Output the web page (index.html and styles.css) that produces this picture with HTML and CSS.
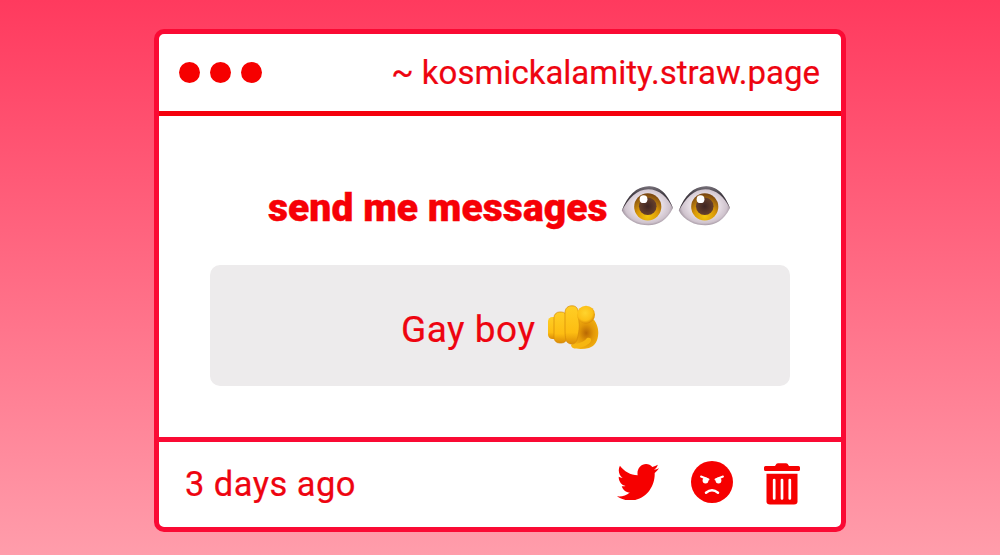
FILE: index.html
```
<!DOCTYPE html>
<html lang="en">
<head>
<meta charset="utf-8">
<title>send me messages</title>
<link rel="stylesheet" href="styles.css">
</head>
<body>
<main class="window">
  <header class="bar">
    <div class="dots"><span class="dot"></span><span class="dot"></span><span class="dot"></span></div>
    <div class="address">~ kosmickalamity.straw.page</div>
  </header>
  <section class="content">
    <h1 class="title"><span class="title-text">send me messages</span>
      <svg class="eye" viewBox="0 0 52 40" role="img" aria-label="eye">
        <defs>
          <radialGradient id="white" cx=".5" cy=".5" r=".55"><stop offset=".4" stop-color="#f1eaf0"/><stop offset=".8" stop-color="#cfc3cd"/><stop offset="1" stop-color="#877a86"/></radialGradient>
          <radialGradient id="iris" cx=".5" cy=".85" r=".8"><stop offset="0" stop-color="#f2c60c"/><stop offset=".5" stop-color="#d89607"/><stop offset="1" stop-color="#7d4a12"/></radialGradient>
          <radialGradient id="pupil"><stop offset="0" stop-color="#3e2522"/><stop offset="1" stop-color="#66402c"/></radialGradient>
          <linearGradient id="lid" x1="0" y1="0" x2="0" y2="1"><stop offset="0" stop-color="#77717a"/><stop offset=".3" stop-color="#454047"/><stop offset="1" stop-color="#383038"/></linearGradient>
        </defs>
        <path d="M.5 24.5C7 10 15 .6 28 .6S48 13 51.7 22C46 34 37 39.3 27 39.3S6 35 .5 24.5Z" fill="url(#white)"/>
        <path d="M.5 25C6 10 15 .3 28 .3S48 12 51.8 22.5C46 11 38 3.2 27 3.2S7 12 .5 25Z" fill="url(#lid)"/>
        <circle cx="26.5" cy="20.8" r="13.6" fill="url(#iris)"/>
        <circle cx="26.5" cy="20.3" r="8.8" fill="url(#pupil)"/>
        <circle cx="22.3" cy="13.2" r="3.9" fill="#fff"/>
      </svg>
      <svg class="eye" viewBox="0 0 52 40" role="img" aria-label="eye">
        <path d="M.5 24.5C7 10 15 .6 28 .6S48 13 51.7 22C46 34 37 39.3 27 39.3S6 35 .5 24.5Z" fill="url(#white)"/>
        <path d="M.5 25C6 10 15 .3 28 .3S48 12 51.8 22.5C46 11 38 3.2 27 3.2S7 12 .5 25Z" fill="url(#lid)"/>
        <circle cx="26.5" cy="20.8" r="13.6" fill="url(#iris)"/>
        <circle cx="26.5" cy="20.3" r="8.8" fill="url(#pupil)"/>
        <circle cx="22.3" cy="13.2" r="3.9" fill="#fff"/>
      </svg>
    </h1>
    <div class="message"><span class="message-text">Gay boy</span>
      <svg class="hand" viewBox="0 0 52 45" role="img" aria-label="pointing hand">
        <defs>
          <linearGradient id="finger" x1="0" y1="0" x2="0" y2="1"><stop offset="0" stop-color="#ffce25"/><stop offset=".7" stop-color="#fdbd12"/><stop offset="1" stop-color="#dc8c05"/></linearGradient>
          <radialGradient id="palm" cx=".55" cy=".5" r=".6"><stop offset="0" stop-color="#b96803"/><stop offset=".45" stop-color="#e39808"/><stop offset="1" stop-color="#f8b713"/></radialGradient>
          <radialGradient id="tip" cx=".45" cy=".4" r=".6"><stop offset="0" stop-color="#ffd42e"/><stop offset=".7" stop-color="#fcbf16"/><stop offset="1" stop-color="#d98b06"/></radialGradient>
        </defs>
        <path d="M27 12L45 13C49 16 51.3 22 51.3 28C51 36 48 41 42 43C36 44.5 29 44 26 43C24 42 24 39 26 38Z" fill="url(#palm)"/>
        <path d="M25 39C31 39 37 37 40 33C42 32 45 33 44 36C42 40 35 43.5 27 43C24 42 23.5 40 25 39Z" fill="#f7b611"/>
        <rect x="1" y="12" width="11" height="22" rx="4.5" fill="url(#finger)"/>
        <rect x="7" y="7" width="13" height="31" rx="5.5" fill="url(#finger)" stroke="#d68a08" stroke-width=".7"/>
        <path d="M18 8C18 3 21 .8 25 .8S31 3 31.5 8L32 17C33 23 31 31 30 35C28 40 23 40 20 37C18 34 18 28 18 22Z" fill="url(#finger)" stroke="#d68a08" stroke-width=".7"/>
        <circle cx="39" cy="9.7" r="9" fill="url(#tip)"/>
      </svg>
    </div>
  </section>
  <footer class="bar foot">
    <div class="time">3 days ago</div>
    <div class="actions">
      <svg class="twitter" viewBox="0 48 512 416" preserveAspectRatio="none"><path d="M459.370 151.716c.325 4.548.325 9.097.325 13.645 0 138.720-105.583 298.558-298.558 298.558-59.452 0-114.680-17.219-161.137-47.106 8.447.974 16.568 1.299 25.340 1.299 49.055 0 94.213-16.568 130.274-44.832-46.132-.975-84.792-31.188-98.112-72.772 6.498.974 12.995 1.624 19.818 1.624 9.421 0 18.843-1.300 27.614-3.573-48.081-9.747-84.143-51.980-84.143-102.985v-1.299c13.969 7.797 30.214 12.670 47.431 13.319-28.264-18.843-46.781-51.005-46.781-87.391 0-19.492 5.197-37.360 14.294-52.954 51.655 63.675 129.300 105.258 216.365 109.807-1.624-7.797-2.599-15.918-2.599-24.040 0-57.828 46.782-104.934 104.934-104.934 30.213 0 57.502 12.670 76.670 33.137 23.715-4.548 46.456-13.320 66.599-25.340-7.798 24.366-24.366 44.833-46.132 57.827 21.117-2.273 41.584-8.122 60.426-16.243-14.292 20.791-32.161 39.308-52.628 54.253z"/></svg>
      <svg class="angry" viewBox="0 0 42 42">
        <circle cx="21" cy="21" r="21"/>
        <g fill="none" stroke="#fff" stroke-linecap="round"><path d="M10 15.5L17.5 18.5M32 15.5L24.5 18.5" stroke-width="1.9"/><path d="M15 31.8Q21 26.8 27 31.8" stroke-width="2.5"/></g>
        <circle cx="14.5" cy="19.5" r="2.9" fill="#fff"/><circle cx="27.5" cy="19.5" r="2.9" fill="#fff"/>
      </svg>
      <svg class="trash" viewBox="0 0 36 42">
        <path d="M1.5 3H11L12.5 .8Q13 .2 14 .2H22Q23 .2 23.5 .8L25 3H34.500Q36 3 36 4.500V6.500Q36 8 34.500 8H1.500Q0 8 0 6.500V4.500Q0 3 1.500 3Z"/>
        <path d="M2.500 10.800H33.500V38.500Q33.500 41.500 30 41.500H6Q2.500 41.500 2.500 38.500Z"/>
        <path d="M10.200 17V35.500M18 17V35.500M25.800 17V35.500" fill="none" stroke="#fff" stroke-width="2.700" stroke-linecap="round"/>
      </svg>
    </div>
  </footer>
</main>
</body>
</html>
```
FILE: styles.css
```
* { box-sizing: border-box; }
body {
  margin: 0;
  height: 555px;
  padding-top: 29px;
  overflow: hidden;
  background: linear-gradient(#ff3a5e, #ff9dab);
  font-family: Roboto, "Liberation Sans", sans-serif;
  color: #ee0410;
}
.window {
  width: 692px;
  height: 503px;
  margin: 0 auto;
  border: 5px solid #fa0a34;
  border-radius: 10px;
  background: #fff;
  display: flex;
  flex-direction: column;
}
.bar {
  display: flex;
  align-items: center;
  justify-content: space-between;
  height: 82px;
  padding: 0 21px 0 20px;
  border-bottom: 5px solid #f5000c;
}
.dots { display: flex; gap: 10px; }
.dot { width: 21px; height: 21px; border-radius: 50%; background: #f60000; }
.address, .message-text, .time { white-space: nowrap; -webkit-text-stroke: .2px currentColor; }
.address { font-size: 33px; }
.content {
  flex: 1;
  display: flex;
  flex-direction: column;
  align-items: center;
  padding-top: 65px;
}
.title {
  display: flex;
  align-items: center;
  height: 50px;
  margin: 0;
  padding-right: 2px;
  font-size: 39px;
  font-weight: 900;
  color: #f60006;
}
.title-text { margin-right: 13px; padding-top: 3px; white-space: nowrap; letter-spacing: .05px; -webkit-text-stroke: .4px currentColor; }
.eye { width: 52.500px; height: 40px; margin-right: 4.500px; }
.eye:last-child { margin-right: 0; }
.message {
  display: flex;
  align-items: center;
  justify-content: center;
  width: 580px;
  height: 121px;
  margin-top: 34px;
  padding-top: 3px;
  border-radius: 10px;
  background: #edebec;
}
.message-text { padding-top: 4px; font-size: 37px; letter-spacing: .5px; }
.hand { width: 52px; height: 45px; margin-left: 11.500px; }
.foot { height: 90px; border-bottom: 0; border-top: 5px solid #fa0a34; padding: 0 41px 0 26px; }
.time { padding-bottom: 2px; font-size: 34.500px; letter-spacing: .45px; }
.actions { display: flex; align-items: flex-start; margin-bottom: 5px; fill: #f60000; }
.twitter { width: 42px; height: 36.500px; margin: 2.500px 32px 0 0; }
.angry { width: 42px; height: 42px; margin-right: 31px; }
.trash { width: 36px; height: 42px; margin-top: 2px; margin-bottom: -2px; }
```
